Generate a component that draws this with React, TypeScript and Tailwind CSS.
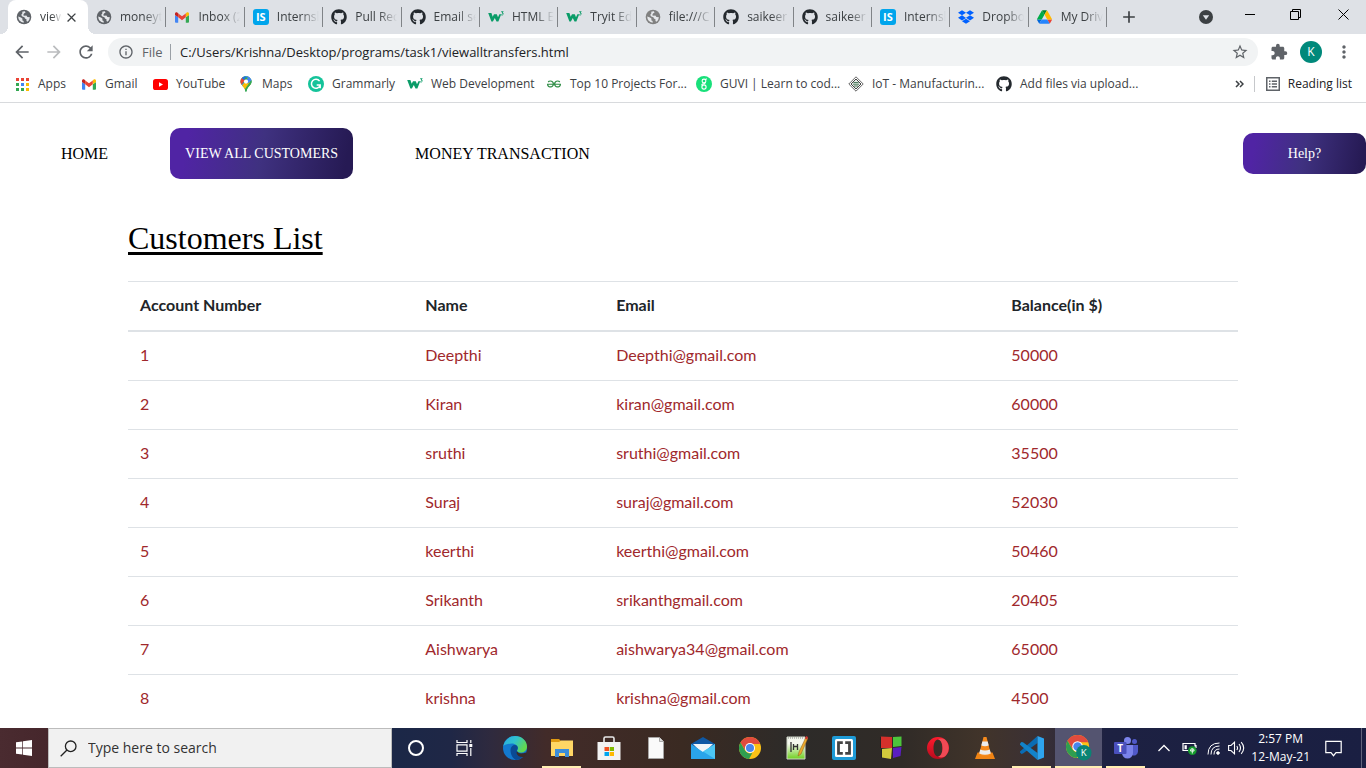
import React from "react";
import {
  MdAdd,
  MdArrowBack,
  MdArrowForward,
  MdClose,
  MdExtension,
  MdInfoOutline,
  MdMoreVert,
  MdRefresh,
  MdStarBorder,
} from "react-icons/md";
import { FaDropbox, FaGithub } from "react-icons/fa";
import { SiGeeksforgeeks } from "react-icons/si";

/* ---------- brand icons ---------- */

const GmailIcon = () => (
  <svg viewBox="0 0 24 18" className="h-[11px] w-[14px]" aria-hidden="true">
    <path fill="#4285f4" d="M1.6 18H5.5V8.7L0 4.6V16.4A1.6 1.6 0 0 0 1.6 18Z" />
    <path fill="#34a853" d="M18.5 18H22.4A1.6 1.6 0 0 0 24 16.4V4.6L18.5 8.7Z" />
    <path fill="#fbbc04" d="M18.5 2V8.7L24 4.6V2.5C24 .4 21.6-.7 20 .5Z" />
    <path fill="#ea4335" d="M5.5 8.7V2L12 6.9L18.5 2V8.7L12 13.6Z" />
    <path fill="#c5221f" d="M0 2.5V4.6L5.5 8.7V2L4 .5C2.3-.7 0 .4 0 2.5Z" />
  </svg>
);

const DriveIcon = () => (
  <svg viewBox="0 0 87.3 78" className="h-[14px] w-[15px]" aria-hidden="true">
    <path d="m6.6 66.85 3.85 6.65c.8 1.4 1.95 2.5 3.3 3.3l13.75-23.8h-27.5c0 1.55.4 3.1 1.2 4.5z" fill="#0066da" />
    <path d="m43.65 25-13.75-23.8c-1.35.8-2.5 1.9-3.3 3.3l-25.4 44a9.06 9.06 0 0 0 -1.2 4.5h27.5z" fill="#00ac47" />
    <path d="m73.55 76.8c1.35-.8 2.5-1.9 3.3-3.3l1.6-2.75 7.65-13.25c.8-1.4 1.2-2.95 1.2-4.5h-27.502l5.852 11.5z" fill="#ea4335" />
    <path d="m43.65 25 13.75-23.8c-1.35-.8-2.9-1.2-4.5-1.2h-18.5c-1.6 0-3.15.45-4.5 1.2z" fill="#00832d" />
    <path d="m59.8 53h-32.3l-13.75 23.8c1.35.8 2.9 1.2 4.5 1.2h50.8c1.6 0 3.15-.45 4.5-1.2z" fill="#2684fc" />
    <path d="m73.4 26.5-12.7-22c-.8-1.4-1.95-2.5-3.3-3.3l-13.75 23.8 16.15 28h27.45c0-1.55-.4-3.1-1.2-4.5z" fill="#ffba00" />
  </svg>
);

const InternshalaIcon = () => (
  <span className="flex h-4 w-4 items-center justify-center rounded-[3px] bg-[#00a5ec] text-[11px] leading-4 font-bold text-white">
    IS
  </span>
);

const W3Icon = () => (
  <svg viewBox="0 0 16 16" className="h-4 w-4" aria-hidden="true">
    <path
      d="M.2 4H3.400L4.700 7.700 6 5.200H8.800L10 8.200 11.400 5.200H13.200L10.400 12.600H8.500L6.800 8.900 4.900 12.600H3.400z"
      fill="#0a9c68"
    />
    <path d="M13.200 2.700h2L14 4q1.500.1 1.300 1.200-.3 1-2.200.7" fill="none" stroke="#0a9c68" strokeWidth=".9" />
  </svg>
);

const Globe = ({ className }: { className: string }) => (
  <svg viewBox="0 0 16 16" className={"h-4 w-4 shrink-0 " + className} aria-hidden="true">
    <circle cx="8" cy="8" r="7.300" fill="currentColor" />
    <path
      d="M8.800 2.200 9.600 3.600 8 4.600 7.200 6.200 8.600 6.800 10.400 6.500 11.400 8 13.900 8.300Q13.700 11 11.600 12.700L10.400 12 10.600 10.400 9 9.600 8.400 8.200 6.300 7.600 5.200 6 6.400 4.200 6.200 2.700Q7.500 2.100 8.800 2.200z"
      fill="#e6e8eb"
    />
    <path d="M2.200 7.600 5 8.400 6.600 9.800 6.200 11.200 7.600 12 7.700 13.800Q2.400 13.200 2.200 7.600z" fill="#e6e8eb" />
  </svg>
);

const GithubIcon = () => <FaGithub className="h-4 w-4 text-[#24292e]" />;
const GlobeIcon = () => <Globe className="text-[#5f6368]" />;
const PaleGlobeIcon = () => <Globe className="text-[#808080]" />;
const DropboxIcon = () => <FaDropbox className="h-4 w-4 text-[#0061ff]" />;

const AppsIcon = () => (
  <svg viewBox="0 0 13 13" className="h-[13px] w-[13px]" aria-hidden="true">
    <path fill="#ea4335" d="M0 0h3v3H0zM5 0h3v3H5zM10 0h3v3h-3z" />
    <path fill="#34a853" d="M0 5h3v3H0zM0 10h3v3H0zM5 10h3v3H5z" />
    <path fill="#4285f4" d="M5 5h3v3H5z" />
    <path fill="#fbbc04" d="M10 5h3v3h-3zM10 10h3v3h-3z" />
  </svg>
);

const YoutubeIcon = () => (
  <svg viewBox="0 0 15 11" className="h-[11px] w-[15px]" aria-hidden="true">
    <rect width="15" height="11" rx="2.6" fill="#f00" />
    <path d="M6 3.2 10 5.5 6 7.8z" fill="#fff" />
  </svg>
);

const MapsIcon = () => (
  <svg viewBox="0 0 12 16" className="h-4 w-3" aria-hidden="true">
    <defs>
      <clipPath id="pin">
        <path d="M6 0a5.6 5.6 0 0 1 5.6 5.6C11.600 9.500 7.200 10.500 6.500 15.500Q6 16.400 5.500 15.500C4.800 10.500.4 9.500.4 5.600A5.600 5.600 0 0 1 6 0z" />
      </clipPath>
    </defs>
    <g clipPath="url(#pin)">
      <path fill="#34a853" d="M0 0h12v16H0z" />
      <path fill="#fbbc04" d="M0 11.500 8 2 11 8 4 15z" />
      <path fill="#4285f4" d="M4 0h8v4.500L8.500 7 1 12V9L8 2z" />
      <path fill="#34a853" d="M12 3v9l-7 4 0-3z" />
      <path fill="#fbbc04" d="M1 10.500 4.500 6.500 8 7.500 4 13z" />
      <path fill="#ea4335" d="M0 9V2l2-1.500L5 4 1.500 8.500z" />
      <path fill="#1a73e8" d="M1.600 2 4 0 6 1 4 4z" />
    </g>
    <circle cx="6" cy="5.600" r="2.100" fill="#fff" />
  </svg>
);

const GrammarlyIcon = () => (
  <svg viewBox="0 0 16 16" className="h-4 w-4" aria-hidden="true">
    <circle cx="8" cy="8" r="8" fill="#15c39a" />
    <path d="M11.600 5.100A4.500 4.500 0 1 0 12.200 9.200M8.700 9h3.500v3.300" fill="none" stroke="#fff" strokeWidth="1.500" />
  </svg>
);

const GuviIcon = () => (
  <svg viewBox="0 0 16 16" className="h-4 w-4" aria-hidden="true">
    <circle cx="8" cy="8" r="8" fill="#18e07a" />
    <g fill="none" stroke="#fff" strokeWidth="1.100">
      <circle cx="8" cy="5" r="1.900" />
      <path d="M9.400 3.600 10.800 2.800M9.600 6.400Q9 8 7.400 7.800 5.400 8 6 9.400" />
      <circle cx="8" cy="11" r="2.100" />
    </g>
  </svg>
);

const IotIcon = () => (
  <svg viewBox="0 0 16 16" className="h-4 w-4" aria-hidden="true">
    <path d="M8 .8 15.200 8 8 15.200.8 8z" fill="#fff" stroke="#666" strokeWidth="1" />
    <path d="M8 3 13 8 8 13 3 8z" fill="#e3e8e4" stroke="#444" strokeWidth="1" />
    <path d="M5.500 6.500h5M5 8.200h6M6 10h4" stroke="#3f6f50" strokeWidth=".9" />
  </svg>
);

/* ---------- browser chrome ---------- */

const tabs = [
  { title: "moneyt", icon: <GlobeIcon /> },
  { title: "Inbox (2", icon: <GmailIcon /> },
  { title: "Internsl", icon: <InternshalaIcon /> },
  { title: "Pull Rec", icon: <GithubIcon /> },
  { title: "Email se", icon: <GithubIcon /> },
  { title: "HTML E", icon: <W3Icon /> },
  { title: "Tryit Ed", icon: <W3Icon /> },
  { title: "file:///C", icon: <PaleGlobeIcon /> },
  { title: "saikeer", icon: <GithubIcon /> },
  { title: "saikeer", icon: <GithubIcon /> },
  { title: "Internsl", icon: <InternshalaIcon /> },
  { title: "Dropbo", icon: <DropboxIcon /> },
  { title: "My Driv", icon: <DriveIcon /> },
];

function TabStrip() {
  return (
    <div className="flex h-[34px] items-stretch bg-[#dee1e6]">
      <div className="flex max-w-[1107px] flex-1 pl-2">
        <div className="relative flex w-20 shrink-0 items-center rounded-t-lg bg-white pl-2">
          <span className="absolute bottom-0 -left-2 h-2 w-2 bg-[radial-gradient(circle_at_0_0,#dee1e6_8px,white_8px)]" />
          <span className="absolute -right-2 bottom-0 h-2 w-2 bg-[radial-gradient(circle_at_100%_0,#dee1e6_8px,white_8px)]" />
          <GlobeIcon />
          <span className="ml-2 w-6 text-xs whitespace-nowrap text-[#3c4043] [mask-image:linear-gradient(to_right,black_50%,transparent_90%)]">
            view
          </span>
          <button type="button" aria-label="Close tab" className="text-[#3c4043]">
            <MdClose className="h-[15px] w-[15px] stroke-current" />
          </button>
        </div>
        {tabs.map((tab, i) => (
          <div key={i} className="flex min-w-0 flex-1 items-center">
            <div className="flex min-w-0 flex-1 items-center gap-2 pl-2">
              <span className="flex w-4 shrink-0 justify-center">{tab.icon}</span>
              <span className="text-xs whitespace-nowrap text-[#3c4043] [mask-image:linear-gradient(to_right,black_24px,transparent_42px)]">
                {tab.title}
              </span>
            </div>
            <span className="h-5 w-px bg-[#808387]" />
          </div>
        ))}
      </div>
      <button type="button" aria-label="New tab" className="ml-3 text-[#3c4043]">
        <MdAdd className="h-5 w-5" />
      </button>
      <div className="ml-auto flex">
        <button type="button" aria-label="Search tabs" className="flex w-12 items-center justify-center">
          <svg viewBox="0 0 14 14" className="h-[14px] w-[14px]" aria-hidden="true">
            <circle cx="7" cy="7" r="7" fill="#3c4043" />
            <path d="M3.800 5.200h6.400L7 9.800z" fill="#dee1e6" />
          </svg>
        </button>
        <button type="button" aria-label="Minimize" className="flex h-7 w-10 items-center justify-center">
          <span className="h-px w-[10px] bg-black" />
        </button>
        <button type="button" aria-label="Restore" className="flex h-7 w-[50px] items-center justify-center">
          <svg viewBox="0 0 11 11" className="h-[11px] w-[11px]" fill="none" stroke="#000" aria-hidden="true">
            <path d="M.5 2.500h8v8h-8zM2.500 2.500v-2h8v8h-2" />
          </svg>
        </button>
        <button type="button" aria-label="Close" className="flex h-7 w-[46px] items-center justify-center">
          <svg viewBox="0 0 11 11" className="h-[11px] w-[11px]" fill="none" stroke="#000" aria-hidden="true">
            <path d="M.5.5l10 10M10.500.5l-10 10" />
          </svg>
        </button>
      </div>
    </div>
  );
}

function Toolbar() {
  return (
    <div className="flex h-9 items-center pl-3 text-[#5f6368]">
      <button type="button" aria-label="Back" className="w-8">
        <MdArrowBack className="h-5 w-5" />
      </button>
      <button type="button" aria-label="Forward" className="w-8 text-[#babcbe]">
        <MdArrowForward className="h-5 w-5" />
      </button>
      <button type="button" aria-label="Reload" className="w-8">
        <MdRefresh className="h-5 w-5" />
      </button>
      <div className="flex h-7 flex-1 items-center rounded-full bg-[#f1f3f4] pr-[9px] pl-[10px] text-sm">
        <MdInfoOutline className="h-4 w-4 shrink-0" />
        <span className="w-9 pl-2 text-[13px]">File</span>
        <span className="h-4 w-px bg-[#9aa0a6]" />
        <input
          aria-label="Address"
          defaultValue="C:/Users/Krishna/Desktop/programs/task1/viewalltransfers.html"
          className="ml-[9px] min-w-0 flex-1 bg-transparent text-[13px] text-[#202124] outline-none"
        />
        <button type="button" aria-label="Bookmark this page">
          <MdStarBorder className="h-[18px] w-[18px]" />
        </button>
      </div>
      <button type="button" aria-label="Extensions" className="ml-3">
        <MdExtension className="h-[18px] w-[18px]" />
      </button>
      <button
        type="button"
        aria-label="Profile"
        className="ml-3 flex h-[22px] w-[22px] items-center justify-center rounded-full bg-[#00897b] text-xs text-white"
      >
        K
      </button>
      <button type="button" aria-label="Menu" className="mr-3 ml-3">
        <MdMoreVert className="h-5 w-5" />
      </button>
    </div>
  );
}

const bookmarks = [
  { label: "Apps", icon: <AppsIcon />, width: "w-[67px]" },
  { label: "Gmail", icon: <GmailIcon />, width: "w-[71px]" },
  { label: "YouTube", icon: <YoutubeIcon />, width: "w-[86px]" },
  { label: "Maps", icon: <MapsIcon />, width: "w-[70px]" },
  { label: "Grammarly", icon: <GrammarlyIcon />, width: "w-[99px]" },
  { label: "Web Development", icon: <W3Icon />, width: "w-[139px]" },
  {
    label: "Top 10 Projects For...",
    icon: <SiGeeksforgeeks className="h-[14px] w-[14px] text-[#2f8d46]" />,
    width: "w-[150px]",
  },
  { label: "GUVI | Learn to cod...", icon: <GuviIcon />, width: "w-[152px]" },
  { label: "IoT - Manufacturin...", icon: <IotIcon />, width: "w-[148px]" },
  { label: "Add files via upload...", icon: <GithubIcon />, width: "w-[150px]" },
];

function BookmarksBar() {
  return (
    <div className="flex h-[33px] items-center border-b border-[#d8dadd] pr-[14px] pb-1 pl-[14px] text-xs text-[#3c4043]">
      {bookmarks.map((b) => (
        <a key={b.label} href="#" className={"flex shrink-0 items-center gap-2 whitespace-nowrap " + b.width}>
          <span className="flex w-4 shrink-0 justify-center">{b.icon}</span>
          {b.label}
        </a>
      ))}
      <button type="button" aria-label="More bookmarks" className="ml-auto">
        <svg viewBox="0 0 9 8" className="h-2 w-[9px]" fill="none" stroke="#3c4043" strokeWidth="1.500" aria-hidden="true">
          <path d="M1 1l3 3-3 3M5 1l3 3-3 3" />
        </svg>
      </button>
      <span className="ml-[10px] h-4 w-px bg-[#c6c8cb]" />
      <button type="button" className="ml-[11px] flex items-center gap-2 text-[#202124]">
        <svg viewBox="0 0 14 14" className="h-[14px] w-[14px]" fill="none" stroke="#5f6368" strokeWidth="1.500" aria-hidden="true">
          <path d="M.75.75h12.500v12.500H.75zM3 4.300h1.500M5.800 4.300H11M3 7h1.500M5.800 7H11M3 9.700h1.500M5.800 9.700H11" />
        </svg>
        Reading list
      </button>
    </div>
  );
}

/* ---------- page ---------- */

const customers = [
  ["1", "Deepthi", "Deepthi@gmail.com", "50000"],
  ["2", "Kiran", "kiran@gmail.com", "60000"],
  ["3", "sruthi", "sruthi@gmail.com", "35500"],
  ["4", "Suraj", "suraj@gmail.com", "52030"],
  ["5", "keerthi", "keerthi@gmail.com", "50460"],
  ["6", "Srikanth", "srikanthgmail.com", "20405"],
  ["7", "Aishwarya", "aishwarya34@gmail.com", "65000"],
  ["8", "krishna", "krishna@gmail.com", "4500"],
];

const columns = [
  { title: "Account Number", width: "w-[25.7%]" },
  { title: "Name", width: "w-[17.2%]" },
  { title: "Email", width: "w-[35.6%]" },
  { title: "Balance(in $)", width: "w-[21.5%]" },
];

function CustomersPage() {
  return (
    <main className="min-h-0 flex-1 overflow-hidden bg-white">
      <nav className="flex h-[101px] items-center font-['Liberation_Serif',serif] text-black">
        <a href="#" className="ml-[61px]">HOME</a>
        <a
          href="#"
          className="ml-[62px] rounded-[10px] bg-[linear-gradient(100deg,#5024a4_10%,#3f3180_50%,#261a54_95%)] p-[15px] text-sm leading-[21px] whitespace-nowrap text-white"
        >
          VIEW ALL CUSTOMERS
        </a>
        <a href="#" className="ml-[62px]">MONEY TRANSACTION</a>
        <button
          type="button"
          className="ml-auto h-[41px] w-[123px] rounded-[10px] bg-[linear-gradient(100deg,#5024a4_10%,#3f3180_50%,#261a54_95%)] text-sm text-white"
        >
          Help?
        </button>
      </nav>
      <div className="mx-auto max-w-[1140px] px-[15px]">
        <h1 className="pt-[15px] font-['Liberation_Serif',serif] text-[32px] leading-[38px] text-black underline decoration-[3px] underline-offset-[3px]">
          Customers List
        </h1>
        <table className="mt-6 w-full table-fixed border-separate border-spacing-0 text-left font-[Lato,sans-serif] text-base leading-6">
          <thead>
            <tr className="text-[#212529]">
              {columns.map((c) => (
                <th key={c.title} className={"border-t border-b-2 border-[#dee2e6] px-3 pt-[11px] pb-[13px] font-bold " + c.width}>
                  {c.title}
                </th>
              ))}
            </tr>
          </thead>
          <tbody className="text-[#a0282c]">
            {customers.map((row) => (
              <tr key={row[0]} className="group">
                {row.map((cell, i) => (
                  <td key={i} className="border-b border-[#dee2e6] px-3 pt-[11px] pb-[13px] group-last:border-b-0">
                    {cell}
                  </td>
                ))}
              </tr>
            ))}
          </tbody>
        </table>
      </div>
    </main>
  );
}

/* ---------- taskbar ---------- */

const EdgeIcon = () => (
  <svg viewBox="0 0 24 24" className="h-6 w-6" aria-hidden="true">
    <defs>
      <linearGradient id="edgeTop" x1="0" y1="0" x2="1" y2=".5">
        <stop offset="0" stopColor="#2aa7e0" />
        <stop offset=".5" stopColor="#30c2cf" />
        <stop offset="1" stopColor="#62d84e" />
      </linearGradient>
    </defs>
    <circle cx="12" cy="12" r="12" fill="#1379cf" />
    <path d="M.3 10C1.500 4 6.500 0 12 0c7 0 12 5 12 10.500 0 4-3 6-6.200 6-2.800 0-4.300-1.200-3.500-2.300C16 11 13 7.500 9 7.500 5 7.500 1.500 9 .3 10z" fill="url(#edgeTop)" />
    <path d="M7.500 14c0-3 2-5 4.500-5 2 0 3 1.500 2.800 3.200-.2 1.500-1.500 1.800-.8 3.300 1.500 2.500 6 2.500 8.700.8C20.500 21.500 16.500 24 13 24 9.500 22.500 7.500 18 7.500 14z" fill="#0b4a94" />
    <path d="M14 15.200c1.500 2.800 6 2.800 8.500 1.300l1.500 1.500-3 3c-4 .5-7-1.500-7.500-4z" fill="#3a2b28" />
  </svg>
);

const ExplorerIcon = () => (
  <svg viewBox="0 0 22 20" className="h-5 w-[22px]" aria-hidden="true">
    <path d="M0 1h8l2 2v5H0z" fill="#e09a12" />
    <path d="M0 4h8l2-1.500h12V18H0z" fill="#ffd665" />
    <path d="M4 11h14v8h-4v-4H8v4H4z" fill="#3c8dda" />
  </svg>
);

const StoreIcon = () => (
  <svg viewBox="0 0 24 24" className="h-6 w-6" aria-hidden="true">
    <path d="M7 8V2.500Q7 1 8.500 1h7Q17 1 17 2.500V8" fill="none" stroke="#e8e8e8" strokeWidth="1.600" />
    <path d="M.5 6h23v18H.5z" fill="#f3f3f3" />
    <path d="M7.500 11H12v4H7.500z" fill="#f25022" />
    <path d="M12.700 11h4.300v4h-4.300z" fill="#7fba00" />
    <path d="M7.500 16H12v4H7.500z" fill="#00a4ef" />
    <path d="M12.700 16h4.300v4h-4.300z" fill="#ffb900" />
  </svg>
);

const FileIcon = () => (
  <svg viewBox="0 0 16 22" className="h-[22px] w-4" aria-hidden="true">
    <path d="M.5.5h11l4 4v17H.5z" fill="#fafafa" stroke="#aaa" strokeWidth=".8" />
    <path d="M11.500.5v4h4" fill="#ddd" stroke="#999" strokeWidth=".8" />
  </svg>
);

const MailIcon = () => (
  <svg viewBox="0 0 24 22" className="h-[22px] w-6" aria-hidden="true">
    <path d="M0 7 12 0l12 7v4H0z" fill="#0f58a4" />
    <path d="M2 7h20l-8 8h-4z" fill="#f1f5f8" />
    <path d="M0 7l12 8 12-8v15H0z" fill="#2aa4ea" />
    <path d="M24 7v15L12 14.500z" fill="#4cc6f4" />
  </svg>
);

const ChromeShape = () => (
  <>
    <circle cx="12" cy="12" r="12" fill="#fbc116" />
    <path d="M1.600 6A12 12 0 0 1 22.400 6L23 7.500H12L6.500 14z" fill="#e14b3e" />
    <path d="M1.600 6 6.800 15Q9 18 12 18L14.500 17.500 11 24A12 12 0 0 1 1.600 6z" fill="#2f9e50" />
    <circle cx="12" cy="12" r="5.500" fill="#fff" />
    <circle cx="12" cy="12" r="4.400" fill="#4a86ec" />
  </>
);

const ChromeIcon = () => (
  <svg viewBox="0 0 24 24" className="h-[22px] w-[22px]" aria-hidden="true">
    <ChromeShape />
  </svg>
);

const ChromeProfileIcon = () => (
  <svg viewBox="0 0 27 27" className="h-[26px] w-[26px]" aria-hidden="true">
    <ChromeShape />
    <circle cx="18.500" cy="18.500" r="8" fill="#0a8474" />
    <text x="18.500" y="22" textAnchor="middle" fontSize="10" fill="#fff">K</text>
  </svg>
);

const NotepadIcon = () => (
  <svg viewBox="0 0 22 24" className="h-6 w-[22px]" aria-hidden="true">
    <defs>
      <linearGradient id="note" x1="0" y1="0" x2="0" y2="1">
        <stop offset=".3" stopColor="#f4f8ee" />
        <stop offset="1" stopColor="#6fd01f" />
      </linearGradient>
    </defs>
    <path d="M1 1h18v22H1z" fill="url(#note)" stroke="#cfd6c8" />
    <path d="M2 2h16" stroke="#888" strokeDasharray="1 1" />
    <path d="M5 6v10M7.500 8v6M7.500 10.500h4M11.500 8v6" fill="none" stroke="#333" strokeWidth="1.300" />
    <path d="M20 1l2 1-7 16-3 2 1-4z" fill="#eaa92c" stroke="#8d5a1c" strokeWidth=".5" />
    <path d="M20 0l2 1-1 2.500-2-1z" fill="#c33" />
  </svg>
);

const BracketsIcon = () => (
  <svg viewBox="0 0 24 24" className="h-6 w-6" aria-hidden="true">
    <rect width="24" height="24" rx="2" fill="#1e9bd7" />
    <rect x="3" y="3" width="18" height="18" rx="1.500" fill="#fff" />
    <path d="M10.800 6.700H6.500v10.600h4.300M13.200 6.700H17.500v10.600h-4.300" fill="none" stroke="#444" strokeWidth="2.800" />
  </svg>
);

const BlocksIcon = () => (
  <svg viewBox="0 0 22 24" className="h-6 w-[22px]" aria-hidden="true">
    <path d="M.5.5 12 1v11H.5z" fill="#d4302b" />
    <path d="M13 1l8.500-.5V10L13 11z" fill="#4cc63c" />
    <path d="M1.500 13 12 12l-1 11-9-1.500z" fill="#d3cb3c" />
    <path d="M13 12l8.500-1-1 9-7.500 2z" fill="#5a1fc0" />
    <path d="M.5.5V12l1 .5V22" fill="none" stroke="#222" />
  </svg>
);

const OperaIcon = () => (
  <svg viewBox="0 0 22 22" className="h-[22px] w-[22px]" aria-hidden="true">
    <defs>
      <linearGradient id="opera" x1="0" y1="0" x2="0" y2="1">
        <stop offset="0" stopColor="#ff1b2d" />
        <stop offset="1" stopColor="#b80c1e" />
      </linearGradient>
    </defs>
    <path
      fillRule="evenodd"
      d="M11 0a11 11 0 1 0 0 22 11 11 0 1 0 0-22zM11 2.500c2.800 0 4.500 3.800 4.500 8.500s-1.700 8.500-4.500 8.500S6.500 15.700 6.500 11 8.200 2.500 11 2.500z"
      fill="url(#opera)"
    />
    <path d="M11 2.500c2-1.500 6-1.500 8.300 1.500a11 11 0 0 1 0 14c-2.300 3-6.300 3-8.300 1.500 2.800 0 4.500-3.800 4.500-8.500S13.800 2.500 11 2.500z" fill="#f04a55" />
  </svg>
);

const VlcIcon = () => (
  <svg viewBox="0 0 20 22" className="h-[22px] w-5" aria-hidden="true">
    <path d="M2.500 15.500h15L20 22H0z" fill="#f08414" />
    <path d="M8.500 0h3L16 17.500q-6 3-12 0z" fill="#f58a1c" />
    <path d="M7.300 4.500h5.400l1 4Q10 10 6.300 8.500z" fill="#ececec" />
    <path d="M5.200 12.500q4.800 2 9.600 0l1 4q-5.800 2.500-11.600 0z" fill="#ececec" />
  </svg>
);

const VsCodeIcon = () => (
  <svg viewBox="0 0 24 24" className="h-6 w-6" aria-hidden="true">
    <path d="M17.500 0v7L3 17.500 1.500 18 0 16.500v-1z" fill="#0a6cb4" />
    <path d="M0 7.500 1.500 6 3 6.200 17.500 17v7L0 8.800z" fill="#1283ca" />
    <path d="M17.500 0 24 2.500v19L17.500 24z" fill="#2ea4ee" />
  </svg>
);

const TeamsIcon = () => (
  <svg viewBox="0 0 24 22" className="h-[22px] w-6" aria-hidden="true">
    <circle cx="20.500" cy="4.500" r="2.500" fill="#5059c9" />
    <path d="M17 8h7v6.500a4 4 0 0 1-6 3.500z" fill="#5059c9" />
    <circle cx="13.500" cy="3.500" r="3.500" fill="#7b83eb" />
    <path d="M8 8h11v8a5.500 5.500 0 0 1-11 0z" fill="#7b83eb" />
    <rect y="5" width="12.500" height="12" rx="1" fill="#4a50bd" />
    <text x="6.200" y="14.500" textAnchor="middle" fontSize="10" fontWeight="bold" fill="#fff">T</text>
  </svg>
);

const apps = [
  { name: "Edge", icon: <EdgeIcon />, state: "closed" },
  { name: "File Explorer", icon: <ExplorerIcon />, state: "open" },
  { name: "Store", icon: <StoreIcon />, state: "closed" },
  { name: "Document", icon: <FileIcon />, state: "closed" },
  { name: "Mail", icon: <MailIcon />, state: "closed" },
  { name: "Chrome", icon: <ChromeIcon />, state: "closed" },
  { name: "Notepad++", icon: <NotepadIcon />, state: "closed" },
  { name: "Brackets", icon: <BracketsIcon />, state: "closed" },
  { name: "Code::Blocks", icon: <BlocksIcon />, state: "closed" },
  { name: "Opera", icon: <OperaIcon />, state: "closed" },
  { name: "VLC", icon: <VlcIcon />, state: "closed" },
  { name: "Visual Studio Code", icon: <VsCodeIcon />, state: "open" },
  { name: "Chrome profile window", icon: <ChromeProfileIcon />, state: "active" },
  { name: "Teams", icon: <TeamsIcon />, state: "open" },
];

function Taskbar() {
  return (
    <footer className="flex h-10 shrink-0 items-stretch bg-[linear-gradient(90deg,#4a2b30_0%,#45262b_4%,#1b2747_29%,#1f2746_33%,#2f2a3e_36%,#422b29_40%,#3a2a22_50%,#2d2b29_58%,#302b27_66%,#41342a_72%,#3a3035_76%,#1d2142_81%,#1a1f42_100%)]">
      <button type="button" aria-label="Start" className="flex w-12 items-center justify-center">
        <svg viewBox="0 0 16 16" className="h-4 w-4" fill="#fff" aria-hidden="true">
          <path d="M0 2.300 6.300 1.400v6.200H0zM7 1.300 16 0v7.600H7zM0 8.400h6.300v6.200L0 13.700zM7 8.400h9V16l-9-1.300z" />
        </svg>
      </button>
      <label className="flex w-[344px] items-center border border-[#bcbcbc] bg-[#f1f1f1] pl-[11px]">
        <svg viewBox="0 0 17 17" className="h-[17px] w-[17px] shrink-0" fill="none" stroke="#222" strokeWidth="1.300" aria-hidden="true">
          <circle cx="10.700" cy="6.300" r="5.300" />
          <path d="M7 10 .7 16.300" />
        </svg>
        <input
          aria-label="Search"
          placeholder="Type here to search"
          className="ml-[11px] min-w-0 flex-1 bg-transparent text-sm outline-none placeholder:text-[#333]"
        />
      </label>
      <button type="button" aria-label="Cortana" className="flex w-12 items-center justify-center">
        <span className="h-4 w-4 rounded-full border-2 border-white" />
      </button>
      <button type="button" aria-label="Task view" className="flex w-12 items-center justify-center">
        <svg viewBox="0 0 17 16" className="h-4 w-[17px]" fill="none" stroke="#fff" strokeWidth="1.200" aria-hidden="true">
          <path d="M1 0v2.500h10V0M1 16v-2.500h10V16M1 4.800h10v6.400H1zM14.800 0v3M14.800 8v8" />
          <path d="M13.300 4h3v3h-3z" fill="#fff" stroke="none" />
        </svg>
      </button>
      <div className="ml-[3px] flex">
        {apps.map((app) => (
          <button
            key={app.name}
            type="button"
            aria-label={app.name}
            className={
              "relative flex w-[47px] items-center justify-center " +
              (app.state === "active" ? "bg-[#545470]" : "")
            }
          >
            {app.icon}
            {app.state !== "closed" && (
              <span
                className={
                  "absolute bottom-0 h-0.5 bg-[#ffeeb2] " + (app.state === "active" ? "inset-x-0" : "inset-x-1")
                }
              />
            )}
          </button>
        ))}
      </div>
      <div className="ml-auto flex items-center text-xs text-white">
        <button type="button" aria-label="Show hidden icons" className="mr-3">
          <svg viewBox="0 0 12 8" className="h-2 w-3" fill="none" stroke="#fff" strokeWidth="1.300" aria-hidden="true">
            <path d="M.5 7 6 1.500 11.500 7" />
          </svg>
        </button>
        <svg viewBox="0 0 15 13" className="mr-[10px] h-[13px] w-[15px]" fill="none" aria-hidden="true">
          <path d="M13 4.500V1.500H1v7h6M14 3v3" stroke="#fff" strokeWidth="1.200" />
          <path d="M2.500 3.200h2.300v4H2.500z" fill="#fff" />
          <circle cx="10.300" cy="8.600" r="4.300" fill="#159a2c" />
          <path d="M10.300 11.500V7M8.500 9q0-2.500 1.800-2.500T12.100 9z" stroke="#fff" strokeWidth=".9" />
        </svg>
        <svg viewBox="0 0 13 13" className="mr-2 h-[13px] w-[13px]" fill="none" stroke="#fff" aria-hidden="true">
          <path d="M1 12.500Q1 1 12.500 1M4 12.500Q4 4 12.500 4M7 12.500Q7 7 12.500 7" />
          <circle cx="11" cy="11" r="1.300" fill="#fff" />
        </svg>
        <svg viewBox="0 0 17 14" className="h-[14px] w-[17px]" fill="none" stroke="#fff" strokeWidth="1.100" aria-hidden="true">
          <path d="M.6 4.500H3L6.500 1.200v11.600L3 9.500H.6zM8.800 5q1.500 2 0 4M11 3q3 4 0 8M13.200 1.200q5 5.800 0 11.600" />
        </svg>
        <div className="ml-[6px] text-center leading-[18px]">
          <div>2:57 PM</div>
          <div>12-May-21</div>
        </div>
        <button type="button" aria-label="Notifications" className="ml-[15px]">
          <svg viewBox="0 0 17 17" className="h-[17px] w-[17px]" fill="none" stroke="#fff" strokeWidth="1.200" aria-hidden="true">
            <path d="M.8 1.300h15.400v11.400H11l-2.500 3-2.500-3H.8z" />
          </svg>
        </button>
        <span className="mr-1 ml-[19px] h-10 w-px bg-[#60647c]" />
      </div>
    </footer>
  );
}

export default function App() {
  return (
    <div className="flex h-screen flex-col overflow-hidden bg-white font-['Open_Sans',sans-serif]">
      <header className="shrink-0">
        <TabStrip />
        <Toolbar />
        <BookmarksBar />
      </header>
      <CustomersPage />
      <Taskbar />
    </div>
  );
}
